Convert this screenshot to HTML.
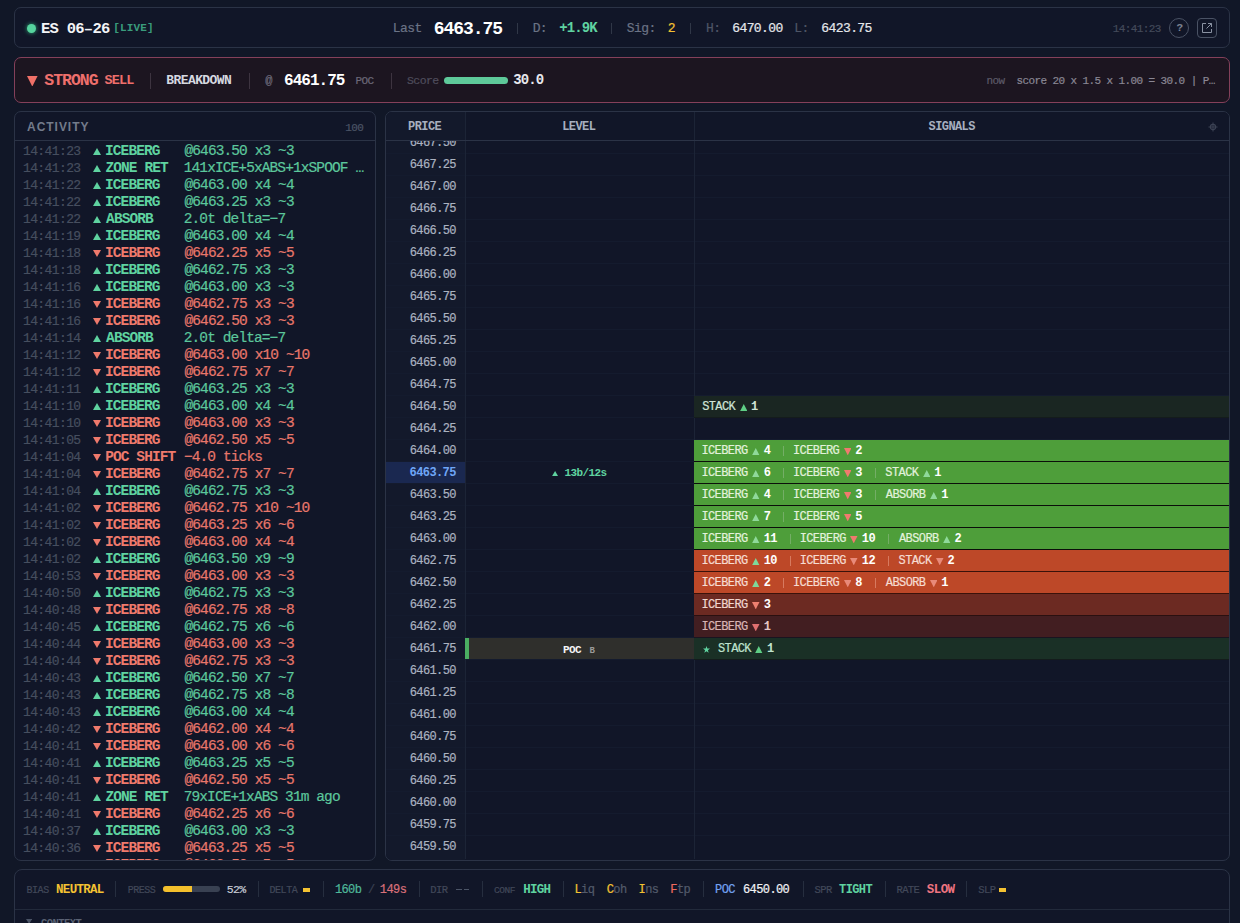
<!DOCTYPE html>
<html><head><meta charset="utf-8"><style>
html,body{margin:0;padding:0;}
body{width:1240px;height:923px;overflow:hidden;background:#111727;position:relative;font-family:"Liberation Mono",monospace;}
.t{position:absolute;white-space:pre;}
.r{-webkit-text-stroke:0.2px currentColor;}
.b{position:absolute;}
</style></head><body>
<div class="b" style="left:14px;top:7px;width:1216px;height:41px;box-sizing:border-box;border:1px solid #2b3346;border-radius:7px;background:#111628;"></div>
<div class="b" style="left:26.5px;top:23.5px;width:9px;height:9px;border-radius:50%;background:#56d49e;box-shadow:0 0 4px #2fae7a;"></div>
<div class="t" style="left:40.96px;top:22.00px;font-size:15.5px;line-height:15.5px;color:#f3f4f6;font-weight:700;letter-spacing:-0.720px;font-family:'Liberation Mono',monospace;">ES 06–26</div>
<div class="t" style="left:113.30px;top:23.00px;font-size:11.0px;line-height:11.0px;color:#3a9c7c;font-weight:700;letter-spacing:0.150px;font-family:'Liberation Mono',monospace;">[LIVE]</div>
<div class="t r" style="left:392.80px;top:22.00px;font-size:13.0px;line-height:13.0px;color:#6b7385;font-weight:400;letter-spacing:-0.600px;font-family:'Liberation Mono',monospace;">Last</div>
<div class="t" style="left:433.80px;top:20.00px;font-size:18.0px;line-height:18.0px;color:#ffffff;font-weight:700;letter-spacing:-1.080px;font-family:'Liberation Mono',monospace;">6463.75</div>
<div class="b" style="left:517px;top:23px;width:1px;height:11px;background:#303747;"></div>
<div class="t r" style="left:532.67px;top:22.00px;font-size:13.0px;line-height:13.0px;color:#6b7385;font-weight:400;letter-spacing:-0.600px;font-family:'Liberation Mono',monospace;">D:</div>
<div class="t" style="left:559.21px;top:21.00px;font-size:14.0px;line-height:14.0px;color:#5fd3a0;font-weight:700;letter-spacing:-0.900px;font-family:'Liberation Mono',monospace;">+1.9K</div>
<div class="b" style="left:611px;top:23px;width:1px;height:11px;background:#303747;"></div>
<div class="t r" style="left:626.80px;top:22.00px;font-size:13.0px;line-height:13.0px;color:#6b7385;font-weight:400;letter-spacing:-0.600px;font-family:'Liberation Mono',monospace;">Sig:</div>
<div class="t r" style="left:667.69px;top:22.00px;font-size:13.0px;line-height:13.0px;color:#f4c232;font-weight:400;letter-spacing:-0.600px;font-family:'Liberation Mono',monospace;">2</div>
<div class="b" style="left:690px;top:23px;width:1px;height:11px;background:#303747;"></div>
<div class="t r" style="left:705.97px;top:22.00px;font-size:13.0px;line-height:13.0px;color:#4e5566;font-weight:400;letter-spacing:-0.600px;font-family:'Liberation Mono',monospace;">H:</div>
<div class="t r" style="left:732.24px;top:22.00px;font-size:13.0px;line-height:13.0px;color:#e5e7eb;font-weight:400;letter-spacing:-0.600px;font-family:'Liberation Mono',monospace;">6470.00</div>
<div class="t r" style="left:794.20px;top:22.00px;font-size:13.0px;line-height:13.0px;color:#4e5566;font-weight:400;letter-spacing:-0.600px;font-family:'Liberation Mono',monospace;">L:</div>
<div class="t r" style="left:821.34px;top:22.00px;font-size:13.0px;line-height:13.0px;color:#e5e7eb;font-weight:400;letter-spacing:-0.600px;font-family:'Liberation Mono',monospace;">6423.75</div>
<div class="t r" style="left:1112.71px;top:24.00px;font-size:11.0px;line-height:11.0px;color:#434a5a;font-weight:400;letter-spacing:-0.600px;font-family:'Liberation Mono',monospace;">14:41:23</div>
<div class="b" style="left:1169px;top:18px;width:20px;height:20px;box-sizing:border-box;border:1px solid #4a5264;border-radius:50%;"></div>
<div class="t" style="left:1176.60px;top:23.00px;font-size:11.0px;line-height:11.0px;color:#7a8292;font-weight:700;letter-spacing:-0.600px;font-family:'Liberation Mono',monospace;">?</div>
<div class="b" style="left:1197px;top:18px;width:20px;height:20px;box-sizing:border-box;border:1px solid #4a5264;border-radius:4px;"></div>
<svg class="b" style="left:1201px;top:22px" width="12" height="12" viewBox="0 0 12 12"><path d="M5 1.5H1.5V10.5H10.5V7" fill="none" stroke="#8a92a2" stroke-width="1"/><path d="M7 1.5H10.5V5M10.5 1.5L5.5 6.5" fill="none" stroke="#8a92a2" stroke-width="1"/></svg>
<div class="b" style="left:14px;top:57px;width:1216px;height:46px;box-sizing:border-box;border:1px solid #84405a;border-radius:7px;background:#1c1520;"></div>
<svg class="b" style="left:27.2px;top:75.5px" width="10.6" height="10.5" viewBox="0 0 10.6 10.5"><polygon points="0,0 10.6,0 5.3,10.5" fill="#f07068"/></svg>
<div class="t" style="left:44.29px;top:73.00px;font-size:16.5px;line-height:16.5px;color:#ee6f6c;font-weight:700;letter-spacing:-1.020px;font-family:'Liberation Mono',monospace;">STRONG</div>
<div class="t" style="left:104.55px;top:74.00px;font-size:13.5px;line-height:13.5px;color:#ee6f6c;font-weight:700;letter-spacing:-0.840px;font-family:'Liberation Mono',monospace;">SELL</div>
<div class="b" style="left:150px;top:73px;width:1px;height:16px;background:#3d3440;"></div>
<div class="t" style="left:166.33px;top:74.00px;font-size:13.0px;line-height:13.0px;color:#d6d9e0;font-weight:700;letter-spacing:-0.600px;font-family:'Liberation Mono',monospace;">BREAKDOWN</div>
<div class="b" style="left:249px;top:73px;width:1px;height:16px;background:#3d3440;"></div>
<div class="t r" style="left:265.24px;top:75.00px;font-size:12.0px;line-height:12.0px;color:#6b6878;font-weight:400;letter-spacing:-0.600px;font-family:'Liberation Mono',monospace;">@</div>
<div class="t" style="left:284.02px;top:73.00px;font-size:16.0px;line-height:16.0px;color:#ffffff;font-weight:700;letter-spacing:-0.960px;font-family:'Liberation Mono',monospace;">6461.75</div>
<div class="t r" style="left:355.43px;top:76.00px;font-size:11.0px;line-height:11.0px;color:#6b6878;font-weight:400;letter-spacing:-0.600px;font-family:'Liberation Mono',monospace;">POC</div>
<div class="b" style="left:391px;top:73px;width:1px;height:16px;background:#3d3440;"></div>
<div class="t r" style="left:407.06px;top:75.00px;font-size:11.5px;line-height:11.5px;color:#4f4d5c;font-weight:400;letter-spacing:-0.600px;font-family:'Liberation Mono',monospace;">Score</div>
<div class="b" style="left:444px;top:76.5px;width:64px;height:7px;border-radius:4px;background:#5ec99a;"></div>
<div class="t" style="left:513.16px;top:73.00px;font-size:14.0px;line-height:14.0px;color:#e8e8ee;font-weight:700;letter-spacing:-0.900px;font-family:'Liberation Mono',monospace;">30.0</div>
<div class="t r" style="left:986.44px;top:76.00px;font-size:11.0px;line-height:11.0px;color:#5c5a68;font-weight:400;letter-spacing:-0.600px;font-family:'Liberation Mono',monospace;">now</div>
<div class="t r" style="left:1016.60px;top:76.00px;font-size:11.0px;line-height:11.0px;color:#8a8794;font-weight:400;letter-spacing:-0.600px;font-family:'Liberation Mono',monospace;">score 20 x 1.5 x 1.00 = 30.0 | P…</div>
<div class="b" style="left:14px;top:111px;width:362px;height:750px;box-sizing:border-box;border:1px solid #2b3346;border-radius:7px;background:#111628;"></div>
<div class="b" style="left:15px;top:140px;width:360px;height:1px;background:#2b3346;"></div>
<div class="t" style="left:27.10px;top:121.12px;font-size:12px;line-height:12px;color:#737b8b;font-weight:700;letter-spacing:0.950px;font-family:'Liberation Sans',sans-serif;">ACTIVITY</div>
<div class="t r" style="left:345.21px;top:123.00px;font-size:11.0px;line-height:11.0px;color:#4b5466;font-weight:400;letter-spacing:-0.600px;font-family:'Liberation Mono',monospace;">100</div>
<div class="b" style="left:15px;top:141px;width:360px;height:719px;overflow:hidden">
<div class="t r" style="left:7.96px;top:4.00px;font-size:13.0px;line-height:13.0px;color:#464e5f;font-weight:400;letter-spacing:-0.600px;font-family:'Liberation Mono',monospace;">14:41:23</div>
<svg class="b" style="left:78.2px;top:6.5px" width="8" height="7" viewBox="0 0 8 7"><polygon points="4.0,0 8,7 0,7" fill="#5fd3a0"/></svg>
<div class="t" style="left:89.99px;top:3.00px;font-size:14.5px;line-height:14.5px;color:#5fd3a0;font-weight:700;letter-spacing:-0.900px;font-family:'Liberation Mono',monospace;">ICEBERG</div>
<div class="t r" style="left:169.49px;top:3.00px;font-size:14.5px;line-height:14.5px;color:#5cc79c;font-weight:400;letter-spacing:-0.900px;font-family:'Liberation Mono',monospace;">@6463.50 x3 ~3</div>
<div class="t r" style="left:7.96px;top:21.00px;font-size:13.0px;line-height:13.0px;color:#464e5f;font-weight:400;letter-spacing:-0.600px;font-family:'Liberation Mono',monospace;">14:41:23</div>
<svg class="b" style="left:78.2px;top:23.5px" width="8" height="7" viewBox="0 0 8 7"><polygon points="4.0,0 8,7 0,7" fill="#5fd3a0"/></svg>
<div class="t" style="left:90.48px;top:20.00px;font-size:14.5px;line-height:14.5px;color:#5fd3a0;font-weight:700;letter-spacing:-0.900px;font-family:'Liberation Mono',monospace;">ZONE RET</div>
<div class="t r" style="left:168.75px;top:20.00px;font-size:14.5px;line-height:14.5px;color:#5cc79c;font-weight:400;letter-spacing:-0.900px;font-family:'Liberation Mono',monospace;">141xICE+5xABS+1xSPOOF …</div>
<div class="t r" style="left:7.96px;top:38.00px;font-size:13.0px;line-height:13.0px;color:#464e5f;font-weight:400;letter-spacing:-0.600px;font-family:'Liberation Mono',monospace;">14:41:22</div>
<svg class="b" style="left:78.2px;top:40.5px" width="8" height="7" viewBox="0 0 8 7"><polygon points="4.0,0 8,7 0,7" fill="#5fd3a0"/></svg>
<div class="t" style="left:89.99px;top:37.00px;font-size:14.5px;line-height:14.5px;color:#5fd3a0;font-weight:700;letter-spacing:-0.900px;font-family:'Liberation Mono',monospace;">ICEBERG</div>
<div class="t r" style="left:169.49px;top:37.00px;font-size:14.5px;line-height:14.5px;color:#5cc79c;font-weight:400;letter-spacing:-0.900px;font-family:'Liberation Mono',monospace;">@6463.00 x4 ~4</div>
<div class="t r" style="left:7.96px;top:55.00px;font-size:13.0px;line-height:13.0px;color:#464e5f;font-weight:400;letter-spacing:-0.600px;font-family:'Liberation Mono',monospace;">14:41:22</div>
<svg class="b" style="left:78.2px;top:57.5px" width="8" height="7" viewBox="0 0 8 7"><polygon points="4.0,0 8,7 0,7" fill="#5fd3a0"/></svg>
<div class="t" style="left:89.99px;top:54.00px;font-size:14.5px;line-height:14.5px;color:#5fd3a0;font-weight:700;letter-spacing:-0.900px;font-family:'Liberation Mono',monospace;">ICEBERG</div>
<div class="t r" style="left:169.49px;top:54.00px;font-size:14.5px;line-height:14.5px;color:#5cc79c;font-weight:400;letter-spacing:-0.900px;font-family:'Liberation Mono',monospace;">@6463.25 x3 ~3</div>
<div class="t r" style="left:7.96px;top:72.00px;font-size:13.0px;line-height:13.0px;color:#464e5f;font-weight:400;letter-spacing:-0.600px;font-family:'Liberation Mono',monospace;">14:41:22</div>
<svg class="b" style="left:78.2px;top:74.5px" width="8" height="7" viewBox="0 0 8 7"><polygon points="4.0,0 8,7 0,7" fill="#5fd3a0"/></svg>
<div class="t" style="left:91.10px;top:71.00px;font-size:14.5px;line-height:14.5px;color:#5fd3a0;font-weight:700;letter-spacing:-0.900px;font-family:'Liberation Mono',monospace;">ABSORB</div>
<div class="t r" style="left:168.78px;top:71.00px;font-size:14.5px;line-height:14.5px;color:#5cc79c;font-weight:400;letter-spacing:-0.900px;font-family:'Liberation Mono',monospace;">2.0t delta=−7</div>
<div class="t r" style="left:7.96px;top:89.00px;font-size:13.0px;line-height:13.0px;color:#464e5f;font-weight:400;letter-spacing:-0.600px;font-family:'Liberation Mono',monospace;">14:41:19</div>
<svg class="b" style="left:78.2px;top:91.5px" width="8" height="7" viewBox="0 0 8 7"><polygon points="4.0,0 8,7 0,7" fill="#5fd3a0"/></svg>
<div class="t" style="left:89.99px;top:88.00px;font-size:14.5px;line-height:14.5px;color:#5fd3a0;font-weight:700;letter-spacing:-0.900px;font-family:'Liberation Mono',monospace;">ICEBERG</div>
<div class="t r" style="left:169.49px;top:88.00px;font-size:14.5px;line-height:14.5px;color:#5cc79c;font-weight:400;letter-spacing:-0.900px;font-family:'Liberation Mono',monospace;">@6463.00 x4 ~4</div>
<div class="t r" style="left:7.96px;top:106.00px;font-size:13.0px;line-height:13.0px;color:#464e5f;font-weight:400;letter-spacing:-0.600px;font-family:'Liberation Mono',monospace;">14:41:18</div>
<svg class="b" style="left:78.2px;top:108.5px" width="8" height="7" viewBox="0 0 8 7"><polygon points="0,0 8,0 4.0,7" fill="#ef7a6c"/></svg>
<div class="t" style="left:89.99px;top:105.00px;font-size:14.5px;line-height:14.5px;color:#ef7a6c;font-weight:700;letter-spacing:-0.900px;font-family:'Liberation Mono',monospace;">ICEBERG</div>
<div class="t r" style="left:169.49px;top:105.00px;font-size:14.5px;line-height:14.5px;color:#e8776b;font-weight:400;letter-spacing:-0.900px;font-family:'Liberation Mono',monospace;">@6462.25 x5 ~5</div>
<div class="t r" style="left:7.96px;top:123.00px;font-size:13.0px;line-height:13.0px;color:#464e5f;font-weight:400;letter-spacing:-0.600px;font-family:'Liberation Mono',monospace;">14:41:18</div>
<svg class="b" style="left:78.2px;top:125.5px" width="8" height="7" viewBox="0 0 8 7"><polygon points="4.0,0 8,7 0,7" fill="#5fd3a0"/></svg>
<div class="t" style="left:89.99px;top:122.00px;font-size:14.5px;line-height:14.5px;color:#5fd3a0;font-weight:700;letter-spacing:-0.900px;font-family:'Liberation Mono',monospace;">ICEBERG</div>
<div class="t r" style="left:169.49px;top:122.00px;font-size:14.5px;line-height:14.5px;color:#5cc79c;font-weight:400;letter-spacing:-0.900px;font-family:'Liberation Mono',monospace;">@6462.75 x3 ~3</div>
<div class="t r" style="left:7.96px;top:140.00px;font-size:13.0px;line-height:13.0px;color:#464e5f;font-weight:400;letter-spacing:-0.600px;font-family:'Liberation Mono',monospace;">14:41:16</div>
<svg class="b" style="left:78.2px;top:142.5px" width="8" height="7" viewBox="0 0 8 7"><polygon points="4.0,0 8,7 0,7" fill="#5fd3a0"/></svg>
<div class="t" style="left:89.99px;top:139.00px;font-size:14.5px;line-height:14.5px;color:#5fd3a0;font-weight:700;letter-spacing:-0.900px;font-family:'Liberation Mono',monospace;">ICEBERG</div>
<div class="t r" style="left:169.49px;top:139.00px;font-size:14.5px;line-height:14.5px;color:#5cc79c;font-weight:400;letter-spacing:-0.900px;font-family:'Liberation Mono',monospace;">@6463.00 x3 ~3</div>
<div class="t r" style="left:7.96px;top:157.00px;font-size:13.0px;line-height:13.0px;color:#464e5f;font-weight:400;letter-spacing:-0.600px;font-family:'Liberation Mono',monospace;">14:41:16</div>
<svg class="b" style="left:78.2px;top:159.5px" width="8" height="7" viewBox="0 0 8 7"><polygon points="0,0 8,0 4.0,7" fill="#ef7a6c"/></svg>
<div class="t" style="left:89.99px;top:156.00px;font-size:14.5px;line-height:14.5px;color:#ef7a6c;font-weight:700;letter-spacing:-0.900px;font-family:'Liberation Mono',monospace;">ICEBERG</div>
<div class="t r" style="left:169.49px;top:156.00px;font-size:14.5px;line-height:14.5px;color:#e8776b;font-weight:400;letter-spacing:-0.900px;font-family:'Liberation Mono',monospace;">@6462.75 x3 ~3</div>
<div class="t r" style="left:7.96px;top:174.00px;font-size:13.0px;line-height:13.0px;color:#464e5f;font-weight:400;letter-spacing:-0.600px;font-family:'Liberation Mono',monospace;">14:41:16</div>
<svg class="b" style="left:78.2px;top:176.5px" width="8" height="7" viewBox="0 0 8 7"><polygon points="0,0 8,0 4.0,7" fill="#ef7a6c"/></svg>
<div class="t" style="left:89.99px;top:173.00px;font-size:14.5px;line-height:14.5px;color:#ef7a6c;font-weight:700;letter-spacing:-0.900px;font-family:'Liberation Mono',monospace;">ICEBERG</div>
<div class="t r" style="left:169.49px;top:173.00px;font-size:14.5px;line-height:14.5px;color:#e8776b;font-weight:400;letter-spacing:-0.900px;font-family:'Liberation Mono',monospace;">@6462.50 x3 ~3</div>
<div class="t r" style="left:7.96px;top:191.00px;font-size:13.0px;line-height:13.0px;color:#464e5f;font-weight:400;letter-spacing:-0.600px;font-family:'Liberation Mono',monospace;">14:41:14</div>
<svg class="b" style="left:78.2px;top:193.5px" width="8" height="7" viewBox="0 0 8 7"><polygon points="4.0,0 8,7 0,7" fill="#5fd3a0"/></svg>
<div class="t" style="left:91.10px;top:190.00px;font-size:14.5px;line-height:14.5px;color:#5fd3a0;font-weight:700;letter-spacing:-0.900px;font-family:'Liberation Mono',monospace;">ABSORB</div>
<div class="t r" style="left:168.78px;top:190.00px;font-size:14.5px;line-height:14.5px;color:#5cc79c;font-weight:400;letter-spacing:-0.900px;font-family:'Liberation Mono',monospace;">2.0t delta=−7</div>
<div class="t r" style="left:7.96px;top:208.00px;font-size:13.0px;line-height:13.0px;color:#464e5f;font-weight:400;letter-spacing:-0.600px;font-family:'Liberation Mono',monospace;">14:41:12</div>
<svg class="b" style="left:78.2px;top:210.5px" width="8" height="7" viewBox="0 0 8 7"><polygon points="0,0 8,0 4.0,7" fill="#ef7a6c"/></svg>
<div class="t" style="left:89.99px;top:207.00px;font-size:14.5px;line-height:14.5px;color:#ef7a6c;font-weight:700;letter-spacing:-0.900px;font-family:'Liberation Mono',monospace;">ICEBERG</div>
<div class="t r" style="left:169.49px;top:207.00px;font-size:14.5px;line-height:14.5px;color:#e8776b;font-weight:400;letter-spacing:-0.900px;font-family:'Liberation Mono',monospace;">@6463.00 x10 ~10</div>
<div class="t r" style="left:7.96px;top:225.00px;font-size:13.0px;line-height:13.0px;color:#464e5f;font-weight:400;letter-spacing:-0.600px;font-family:'Liberation Mono',monospace;">14:41:12</div>
<svg class="b" style="left:78.2px;top:227.5px" width="8" height="7" viewBox="0 0 8 7"><polygon points="0,0 8,0 4.0,7" fill="#ef7a6c"/></svg>
<div class="t" style="left:89.99px;top:224.00px;font-size:14.5px;line-height:14.5px;color:#ef7a6c;font-weight:700;letter-spacing:-0.900px;font-family:'Liberation Mono',monospace;">ICEBERG</div>
<div class="t r" style="left:169.49px;top:224.00px;font-size:14.5px;line-height:14.5px;color:#e8776b;font-weight:400;letter-spacing:-0.900px;font-family:'Liberation Mono',monospace;">@6462.75 x7 ~7</div>
<div class="t r" style="left:7.96px;top:242.00px;font-size:13.0px;line-height:13.0px;color:#464e5f;font-weight:400;letter-spacing:-0.600px;font-family:'Liberation Mono',monospace;">14:41:11</div>
<svg class="b" style="left:78.2px;top:244.5px" width="8" height="7" viewBox="0 0 8 7"><polygon points="4.0,0 8,7 0,7" fill="#5fd3a0"/></svg>
<div class="t" style="left:89.99px;top:241.00px;font-size:14.5px;line-height:14.5px;color:#5fd3a0;font-weight:700;letter-spacing:-0.900px;font-family:'Liberation Mono',monospace;">ICEBERG</div>
<div class="t r" style="left:169.49px;top:241.00px;font-size:14.5px;line-height:14.5px;color:#5cc79c;font-weight:400;letter-spacing:-0.900px;font-family:'Liberation Mono',monospace;">@6463.25 x3 ~3</div>
<div class="t r" style="left:7.96px;top:259.00px;font-size:13.0px;line-height:13.0px;color:#464e5f;font-weight:400;letter-spacing:-0.600px;font-family:'Liberation Mono',monospace;">14:41:10</div>
<svg class="b" style="left:78.2px;top:261.5px" width="8" height="7" viewBox="0 0 8 7"><polygon points="4.0,0 8,7 0,7" fill="#5fd3a0"/></svg>
<div class="t" style="left:89.99px;top:258.00px;font-size:14.5px;line-height:14.5px;color:#5fd3a0;font-weight:700;letter-spacing:-0.900px;font-family:'Liberation Mono',monospace;">ICEBERG</div>
<div class="t r" style="left:169.49px;top:258.00px;font-size:14.5px;line-height:14.5px;color:#5cc79c;font-weight:400;letter-spacing:-0.900px;font-family:'Liberation Mono',monospace;">@6463.00 x4 ~4</div>
<div class="t r" style="left:7.96px;top:276.00px;font-size:13.0px;line-height:13.0px;color:#464e5f;font-weight:400;letter-spacing:-0.600px;font-family:'Liberation Mono',monospace;">14:41:10</div>
<svg class="b" style="left:78.2px;top:278.5px" width="8" height="7" viewBox="0 0 8 7"><polygon points="0,0 8,0 4.0,7" fill="#ef7a6c"/></svg>
<div class="t" style="left:89.99px;top:275.00px;font-size:14.5px;line-height:14.5px;color:#ef7a6c;font-weight:700;letter-spacing:-0.900px;font-family:'Liberation Mono',monospace;">ICEBERG</div>
<div class="t r" style="left:169.49px;top:275.00px;font-size:14.5px;line-height:14.5px;color:#e8776b;font-weight:400;letter-spacing:-0.900px;font-family:'Liberation Mono',monospace;">@6463.00 x3 ~3</div>
<div class="t r" style="left:7.96px;top:293.00px;font-size:13.0px;line-height:13.0px;color:#464e5f;font-weight:400;letter-spacing:-0.600px;font-family:'Liberation Mono',monospace;">14:41:05</div>
<svg class="b" style="left:78.2px;top:295.5px" width="8" height="7" viewBox="0 0 8 7"><polygon points="0,0 8,0 4.0,7" fill="#ef7a6c"/></svg>
<div class="t" style="left:89.99px;top:292.00px;font-size:14.5px;line-height:14.5px;color:#ef7a6c;font-weight:700;letter-spacing:-0.900px;font-family:'Liberation Mono',monospace;">ICEBERG</div>
<div class="t r" style="left:169.49px;top:292.00px;font-size:14.5px;line-height:14.5px;color:#e8776b;font-weight:400;letter-spacing:-0.900px;font-family:'Liberation Mono',monospace;">@6462.50 x5 ~5</div>
<div class="t r" style="left:7.96px;top:310.00px;font-size:13.0px;line-height:13.0px;color:#464e5f;font-weight:400;letter-spacing:-0.600px;font-family:'Liberation Mono',monospace;">14:41:04</div>
<svg class="b" style="left:78.2px;top:312.5px" width="8" height="7" viewBox="0 0 8 7"><polygon points="0,0 8,0 4.0,7" fill="#ef7a6c"/></svg>
<div class="t" style="left:90.14px;top:309.00px;font-size:14.5px;line-height:14.5px;color:#ef7a6c;font-weight:700;letter-spacing:-0.900px;font-family:'Liberation Mono',monospace;">POC SHIFT</div>
<div class="t r" style="left:168.97px;top:309.00px;font-size:14.5px;line-height:14.5px;color:#e8776b;font-weight:400;letter-spacing:-0.900px;font-family:'Liberation Mono',monospace;">−4.0 ticks</div>
<div class="t r" style="left:7.96px;top:327.00px;font-size:13.0px;line-height:13.0px;color:#464e5f;font-weight:400;letter-spacing:-0.600px;font-family:'Liberation Mono',monospace;">14:41:04</div>
<svg class="b" style="left:78.2px;top:329.5px" width="8" height="7" viewBox="0 0 8 7"><polygon points="0,0 8,0 4.0,7" fill="#ef7a6c"/></svg>
<div class="t" style="left:89.99px;top:326.00px;font-size:14.5px;line-height:14.5px;color:#ef7a6c;font-weight:700;letter-spacing:-0.900px;font-family:'Liberation Mono',monospace;">ICEBERG</div>
<div class="t r" style="left:169.49px;top:326.00px;font-size:14.5px;line-height:14.5px;color:#e8776b;font-weight:400;letter-spacing:-0.900px;font-family:'Liberation Mono',monospace;">@6462.75 x7 ~7</div>
<div class="t r" style="left:7.96px;top:344.00px;font-size:13.0px;line-height:13.0px;color:#464e5f;font-weight:400;letter-spacing:-0.600px;font-family:'Liberation Mono',monospace;">14:41:04</div>
<svg class="b" style="left:78.2px;top:346.5px" width="8" height="7" viewBox="0 0 8 7"><polygon points="4.0,0 8,7 0,7" fill="#5fd3a0"/></svg>
<div class="t" style="left:89.99px;top:343.00px;font-size:14.5px;line-height:14.5px;color:#5fd3a0;font-weight:700;letter-spacing:-0.900px;font-family:'Liberation Mono',monospace;">ICEBERG</div>
<div class="t r" style="left:169.49px;top:343.00px;font-size:14.5px;line-height:14.5px;color:#5cc79c;font-weight:400;letter-spacing:-0.900px;font-family:'Liberation Mono',monospace;">@6462.75 x3 ~3</div>
<div class="t r" style="left:7.96px;top:361.00px;font-size:13.0px;line-height:13.0px;color:#464e5f;font-weight:400;letter-spacing:-0.600px;font-family:'Liberation Mono',monospace;">14:41:02</div>
<svg class="b" style="left:78.2px;top:363.5px" width="8" height="7" viewBox="0 0 8 7"><polygon points="0,0 8,0 4.0,7" fill="#ef7a6c"/></svg>
<div class="t" style="left:89.99px;top:360.00px;font-size:14.5px;line-height:14.5px;color:#ef7a6c;font-weight:700;letter-spacing:-0.900px;font-family:'Liberation Mono',monospace;">ICEBERG</div>
<div class="t r" style="left:169.49px;top:360.00px;font-size:14.5px;line-height:14.5px;color:#e8776b;font-weight:400;letter-spacing:-0.900px;font-family:'Liberation Mono',monospace;">@6462.75 x10 ~10</div>
<div class="t r" style="left:7.96px;top:378.00px;font-size:13.0px;line-height:13.0px;color:#464e5f;font-weight:400;letter-spacing:-0.600px;font-family:'Liberation Mono',monospace;">14:41:02</div>
<svg class="b" style="left:78.2px;top:380.5px" width="8" height="7" viewBox="0 0 8 7"><polygon points="0,0 8,0 4.0,7" fill="#ef7a6c"/></svg>
<div class="t" style="left:89.99px;top:377.00px;font-size:14.5px;line-height:14.5px;color:#ef7a6c;font-weight:700;letter-spacing:-0.900px;font-family:'Liberation Mono',monospace;">ICEBERG</div>
<div class="t r" style="left:169.49px;top:377.00px;font-size:14.5px;line-height:14.5px;color:#e8776b;font-weight:400;letter-spacing:-0.900px;font-family:'Liberation Mono',monospace;">@6463.25 x6 ~6</div>
<div class="t r" style="left:7.96px;top:395.00px;font-size:13.0px;line-height:13.0px;color:#464e5f;font-weight:400;letter-spacing:-0.600px;font-family:'Liberation Mono',monospace;">14:41:02</div>
<svg class="b" style="left:78.2px;top:397.5px" width="8" height="7" viewBox="0 0 8 7"><polygon points="0,0 8,0 4.0,7" fill="#ef7a6c"/></svg>
<div class="t" style="left:89.99px;top:394.00px;font-size:14.5px;line-height:14.5px;color:#ef7a6c;font-weight:700;letter-spacing:-0.900px;font-family:'Liberation Mono',monospace;">ICEBERG</div>
<div class="t r" style="left:169.49px;top:394.00px;font-size:14.5px;line-height:14.5px;color:#e8776b;font-weight:400;letter-spacing:-0.900px;font-family:'Liberation Mono',monospace;">@6463.00 x4 ~4</div>
<div class="t r" style="left:7.96px;top:412.00px;font-size:13.0px;line-height:13.0px;color:#464e5f;font-weight:400;letter-spacing:-0.600px;font-family:'Liberation Mono',monospace;">14:41:02</div>
<svg class="b" style="left:78.2px;top:414.5px" width="8" height="7" viewBox="0 0 8 7"><polygon points="4.0,0 8,7 0,7" fill="#5fd3a0"/></svg>
<div class="t" style="left:89.99px;top:411.00px;font-size:14.5px;line-height:14.5px;color:#5fd3a0;font-weight:700;letter-spacing:-0.900px;font-family:'Liberation Mono',monospace;">ICEBERG</div>
<div class="t r" style="left:169.49px;top:411.00px;font-size:14.5px;line-height:14.5px;color:#5cc79c;font-weight:400;letter-spacing:-0.900px;font-family:'Liberation Mono',monospace;">@6463.50 x9 ~9</div>
<div class="t r" style="left:7.96px;top:429.00px;font-size:13.0px;line-height:13.0px;color:#464e5f;font-weight:400;letter-spacing:-0.600px;font-family:'Liberation Mono',monospace;">14:40:53</div>
<svg class="b" style="left:78.2px;top:431.5px" width="8" height="7" viewBox="0 0 8 7"><polygon points="0,0 8,0 4.0,7" fill="#ef7a6c"/></svg>
<div class="t" style="left:89.99px;top:428.00px;font-size:14.5px;line-height:14.5px;color:#ef7a6c;font-weight:700;letter-spacing:-0.900px;font-family:'Liberation Mono',monospace;">ICEBERG</div>
<div class="t r" style="left:169.49px;top:428.00px;font-size:14.5px;line-height:14.5px;color:#e8776b;font-weight:400;letter-spacing:-0.900px;font-family:'Liberation Mono',monospace;">@6463.00 x3 ~3</div>
<div class="t r" style="left:7.96px;top:446.00px;font-size:13.0px;line-height:13.0px;color:#464e5f;font-weight:400;letter-spacing:-0.600px;font-family:'Liberation Mono',monospace;">14:40:50</div>
<svg class="b" style="left:78.2px;top:448.5px" width="8" height="7" viewBox="0 0 8 7"><polygon points="4.0,0 8,7 0,7" fill="#5fd3a0"/></svg>
<div class="t" style="left:89.99px;top:445.00px;font-size:14.5px;line-height:14.5px;color:#5fd3a0;font-weight:700;letter-spacing:-0.900px;font-family:'Liberation Mono',monospace;">ICEBERG</div>
<div class="t r" style="left:169.49px;top:445.00px;font-size:14.5px;line-height:14.5px;color:#5cc79c;font-weight:400;letter-spacing:-0.900px;font-family:'Liberation Mono',monospace;">@6462.75 x3 ~3</div>
<div class="t r" style="left:7.96px;top:463.00px;font-size:13.0px;line-height:13.0px;color:#464e5f;font-weight:400;letter-spacing:-0.600px;font-family:'Liberation Mono',monospace;">14:40:48</div>
<svg class="b" style="left:78.2px;top:465.5px" width="8" height="7" viewBox="0 0 8 7"><polygon points="0,0 8,0 4.0,7" fill="#ef7a6c"/></svg>
<div class="t" style="left:89.99px;top:462.00px;font-size:14.5px;line-height:14.5px;color:#ef7a6c;font-weight:700;letter-spacing:-0.900px;font-family:'Liberation Mono',monospace;">ICEBERG</div>
<div class="t r" style="left:169.49px;top:462.00px;font-size:14.5px;line-height:14.5px;color:#e8776b;font-weight:400;letter-spacing:-0.900px;font-family:'Liberation Mono',monospace;">@6462.75 x8 ~8</div>
<div class="t r" style="left:7.96px;top:480.00px;font-size:13.0px;line-height:13.0px;color:#464e5f;font-weight:400;letter-spacing:-0.600px;font-family:'Liberation Mono',monospace;">14:40:45</div>
<svg class="b" style="left:78.2px;top:482.5px" width="8" height="7" viewBox="0 0 8 7"><polygon points="4.0,0 8,7 0,7" fill="#5fd3a0"/></svg>
<div class="t" style="left:89.99px;top:479.00px;font-size:14.5px;line-height:14.5px;color:#5fd3a0;font-weight:700;letter-spacing:-0.900px;font-family:'Liberation Mono',monospace;">ICEBERG</div>
<div class="t r" style="left:169.49px;top:479.00px;font-size:14.5px;line-height:14.5px;color:#5cc79c;font-weight:400;letter-spacing:-0.900px;font-family:'Liberation Mono',monospace;">@6462.75 x6 ~6</div>
<div class="t r" style="left:7.96px;top:497.00px;font-size:13.0px;line-height:13.0px;color:#464e5f;font-weight:400;letter-spacing:-0.600px;font-family:'Liberation Mono',monospace;">14:40:44</div>
<svg class="b" style="left:78.2px;top:499.5px" width="8" height="7" viewBox="0 0 8 7"><polygon points="0,0 8,0 4.0,7" fill="#ef7a6c"/></svg>
<div class="t" style="left:89.99px;top:496.00px;font-size:14.5px;line-height:14.5px;color:#ef7a6c;font-weight:700;letter-spacing:-0.900px;font-family:'Liberation Mono',monospace;">ICEBERG</div>
<div class="t r" style="left:169.49px;top:496.00px;font-size:14.5px;line-height:14.5px;color:#e8776b;font-weight:400;letter-spacing:-0.900px;font-family:'Liberation Mono',monospace;">@6463.00 x3 ~3</div>
<div class="t r" style="left:7.96px;top:514.00px;font-size:13.0px;line-height:13.0px;color:#464e5f;font-weight:400;letter-spacing:-0.600px;font-family:'Liberation Mono',monospace;">14:40:44</div>
<svg class="b" style="left:78.2px;top:516.5px" width="8" height="7" viewBox="0 0 8 7"><polygon points="0,0 8,0 4.0,7" fill="#ef7a6c"/></svg>
<div class="t" style="left:89.99px;top:513.00px;font-size:14.5px;line-height:14.5px;color:#ef7a6c;font-weight:700;letter-spacing:-0.900px;font-family:'Liberation Mono',monospace;">ICEBERG</div>
<div class="t r" style="left:169.49px;top:513.00px;font-size:14.5px;line-height:14.5px;color:#e8776b;font-weight:400;letter-spacing:-0.900px;font-family:'Liberation Mono',monospace;">@6462.75 x3 ~3</div>
<div class="t r" style="left:7.96px;top:531.00px;font-size:13.0px;line-height:13.0px;color:#464e5f;font-weight:400;letter-spacing:-0.600px;font-family:'Liberation Mono',monospace;">14:40:43</div>
<svg class="b" style="left:78.2px;top:533.5px" width="8" height="7" viewBox="0 0 8 7"><polygon points="4.0,0 8,7 0,7" fill="#5fd3a0"/></svg>
<div class="t" style="left:89.99px;top:530.00px;font-size:14.5px;line-height:14.5px;color:#5fd3a0;font-weight:700;letter-spacing:-0.900px;font-family:'Liberation Mono',monospace;">ICEBERG</div>
<div class="t r" style="left:169.49px;top:530.00px;font-size:14.5px;line-height:14.5px;color:#5cc79c;font-weight:400;letter-spacing:-0.900px;font-family:'Liberation Mono',monospace;">@6462.50 x7 ~7</div>
<div class="t r" style="left:7.96px;top:548.00px;font-size:13.0px;line-height:13.0px;color:#464e5f;font-weight:400;letter-spacing:-0.600px;font-family:'Liberation Mono',monospace;">14:40:43</div>
<svg class="b" style="left:78.2px;top:550.5px" width="8" height="7" viewBox="0 0 8 7"><polygon points="4.0,0 8,7 0,7" fill="#5fd3a0"/></svg>
<div class="t" style="left:89.99px;top:547.00px;font-size:14.5px;line-height:14.5px;color:#5fd3a0;font-weight:700;letter-spacing:-0.900px;font-family:'Liberation Mono',monospace;">ICEBERG</div>
<div class="t r" style="left:169.49px;top:547.00px;font-size:14.5px;line-height:14.5px;color:#5cc79c;font-weight:400;letter-spacing:-0.900px;font-family:'Liberation Mono',monospace;">@6462.75 x8 ~8</div>
<div class="t r" style="left:7.96px;top:565.00px;font-size:13.0px;line-height:13.0px;color:#464e5f;font-weight:400;letter-spacing:-0.600px;font-family:'Liberation Mono',monospace;">14:40:43</div>
<svg class="b" style="left:78.2px;top:567.5px" width="8" height="7" viewBox="0 0 8 7"><polygon points="4.0,0 8,7 0,7" fill="#5fd3a0"/></svg>
<div class="t" style="left:89.99px;top:564.00px;font-size:14.5px;line-height:14.5px;color:#5fd3a0;font-weight:700;letter-spacing:-0.900px;font-family:'Liberation Mono',monospace;">ICEBERG</div>
<div class="t r" style="left:169.49px;top:564.00px;font-size:14.5px;line-height:14.5px;color:#5cc79c;font-weight:400;letter-spacing:-0.900px;font-family:'Liberation Mono',monospace;">@6463.00 x4 ~4</div>
<div class="t r" style="left:7.96px;top:582.00px;font-size:13.0px;line-height:13.0px;color:#464e5f;font-weight:400;letter-spacing:-0.600px;font-family:'Liberation Mono',monospace;">14:40:42</div>
<svg class="b" style="left:78.2px;top:584.5px" width="8" height="7" viewBox="0 0 8 7"><polygon points="0,0 8,0 4.0,7" fill="#ef7a6c"/></svg>
<div class="t" style="left:89.99px;top:581.00px;font-size:14.5px;line-height:14.5px;color:#ef7a6c;font-weight:700;letter-spacing:-0.900px;font-family:'Liberation Mono',monospace;">ICEBERG</div>
<div class="t r" style="left:169.49px;top:581.00px;font-size:14.5px;line-height:14.5px;color:#e8776b;font-weight:400;letter-spacing:-0.900px;font-family:'Liberation Mono',monospace;">@6462.00 x4 ~4</div>
<div class="t r" style="left:7.96px;top:599.00px;font-size:13.0px;line-height:13.0px;color:#464e5f;font-weight:400;letter-spacing:-0.600px;font-family:'Liberation Mono',monospace;">14:40:41</div>
<svg class="b" style="left:78.2px;top:601.5px" width="8" height="7" viewBox="0 0 8 7"><polygon points="0,0 8,0 4.0,7" fill="#ef7a6c"/></svg>
<div class="t" style="left:89.99px;top:598.00px;font-size:14.5px;line-height:14.5px;color:#ef7a6c;font-weight:700;letter-spacing:-0.900px;font-family:'Liberation Mono',monospace;">ICEBERG</div>
<div class="t r" style="left:169.49px;top:598.00px;font-size:14.5px;line-height:14.5px;color:#e8776b;font-weight:400;letter-spacing:-0.900px;font-family:'Liberation Mono',monospace;">@6463.00 x6 ~6</div>
<div class="t r" style="left:7.96px;top:616.00px;font-size:13.0px;line-height:13.0px;color:#464e5f;font-weight:400;letter-spacing:-0.600px;font-family:'Liberation Mono',monospace;">14:40:41</div>
<svg class="b" style="left:78.2px;top:618.5px" width="8" height="7" viewBox="0 0 8 7"><polygon points="4.0,0 8,7 0,7" fill="#5fd3a0"/></svg>
<div class="t" style="left:89.99px;top:615.00px;font-size:14.5px;line-height:14.5px;color:#5fd3a0;font-weight:700;letter-spacing:-0.900px;font-family:'Liberation Mono',monospace;">ICEBERG</div>
<div class="t r" style="left:169.49px;top:615.00px;font-size:14.5px;line-height:14.5px;color:#5cc79c;font-weight:400;letter-spacing:-0.900px;font-family:'Liberation Mono',monospace;">@6463.25 x5 ~5</div>
<div class="t r" style="left:7.96px;top:633.00px;font-size:13.0px;line-height:13.0px;color:#464e5f;font-weight:400;letter-spacing:-0.600px;font-family:'Liberation Mono',monospace;">14:40:41</div>
<svg class="b" style="left:78.2px;top:635.5px" width="8" height="7" viewBox="0 0 8 7"><polygon points="0,0 8,0 4.0,7" fill="#ef7a6c"/></svg>
<div class="t" style="left:89.99px;top:632.00px;font-size:14.5px;line-height:14.5px;color:#ef7a6c;font-weight:700;letter-spacing:-0.900px;font-family:'Liberation Mono',monospace;">ICEBERG</div>
<div class="t r" style="left:169.49px;top:632.00px;font-size:14.5px;line-height:14.5px;color:#e8776b;font-weight:400;letter-spacing:-0.900px;font-family:'Liberation Mono',monospace;">@6462.50 x5 ~5</div>
<div class="t r" style="left:7.96px;top:650.00px;font-size:13.0px;line-height:13.0px;color:#464e5f;font-weight:400;letter-spacing:-0.600px;font-family:'Liberation Mono',monospace;">14:40:41</div>
<svg class="b" style="left:78.2px;top:652.5px" width="8" height="7" viewBox="0 0 8 7"><polygon points="4.0,0 8,7 0,7" fill="#5fd3a0"/></svg>
<div class="t" style="left:90.48px;top:649.00px;font-size:14.5px;line-height:14.5px;color:#5fd3a0;font-weight:700;letter-spacing:-0.900px;font-family:'Liberation Mono',monospace;">ZONE RET</div>
<div class="t r" style="left:168.68px;top:649.00px;font-size:14.5px;line-height:14.5px;color:#5cc79c;font-weight:400;letter-spacing:-0.900px;font-family:'Liberation Mono',monospace;">79xICE+1xABS 31m ago</div>
<div class="t r" style="left:7.96px;top:667.00px;font-size:13.0px;line-height:13.0px;color:#464e5f;font-weight:400;letter-spacing:-0.600px;font-family:'Liberation Mono',monospace;">14:40:41</div>
<svg class="b" style="left:78.2px;top:669.5px" width="8" height="7" viewBox="0 0 8 7"><polygon points="0,0 8,0 4.0,7" fill="#ef7a6c"/></svg>
<div class="t" style="left:89.99px;top:666.00px;font-size:14.5px;line-height:14.5px;color:#ef7a6c;font-weight:700;letter-spacing:-0.900px;font-family:'Liberation Mono',monospace;">ICEBERG</div>
<div class="t r" style="left:169.49px;top:666.00px;font-size:14.5px;line-height:14.5px;color:#e8776b;font-weight:400;letter-spacing:-0.900px;font-family:'Liberation Mono',monospace;">@6462.25 x6 ~6</div>
<div class="t r" style="left:7.96px;top:684.00px;font-size:13.0px;line-height:13.0px;color:#464e5f;font-weight:400;letter-spacing:-0.600px;font-family:'Liberation Mono',monospace;">14:40:37</div>
<svg class="b" style="left:78.2px;top:686.5px" width="8" height="7" viewBox="0 0 8 7"><polygon points="4.0,0 8,7 0,7" fill="#5fd3a0"/></svg>
<div class="t" style="left:89.99px;top:683.00px;font-size:14.5px;line-height:14.5px;color:#5fd3a0;font-weight:700;letter-spacing:-0.900px;font-family:'Liberation Mono',monospace;">ICEBERG</div>
<div class="t r" style="left:169.49px;top:683.00px;font-size:14.5px;line-height:14.5px;color:#5cc79c;font-weight:400;letter-spacing:-0.900px;font-family:'Liberation Mono',monospace;">@6463.00 x3 ~3</div>
<div class="t r" style="left:7.96px;top:701.00px;font-size:13.0px;line-height:13.0px;color:#464e5f;font-weight:400;letter-spacing:-0.600px;font-family:'Liberation Mono',monospace;">14:40:36</div>
<svg class="b" style="left:78.2px;top:703.5px" width="8" height="7" viewBox="0 0 8 7"><polygon points="0,0 8,0 4.0,7" fill="#ef7a6c"/></svg>
<div class="t" style="left:89.99px;top:700.00px;font-size:14.5px;line-height:14.5px;color:#ef7a6c;font-weight:700;letter-spacing:-0.900px;font-family:'Liberation Mono',monospace;">ICEBERG</div>
<div class="t r" style="left:169.49px;top:700.00px;font-size:14.5px;line-height:14.5px;color:#e8776b;font-weight:400;letter-spacing:-0.900px;font-family:'Liberation Mono',monospace;">@6463.25 x5 ~5</div>
<div class="t r" style="left:7.96px;top:718.00px;font-size:13.0px;line-height:13.0px;color:#464e5f;font-weight:400;letter-spacing:-0.600px;font-family:'Liberation Mono',monospace;">14:40:36</div>
<svg class="b" style="left:78.2px;top:720.5px" width="8" height="7" viewBox="0 0 8 7"><polygon points="0,0 8,0 4.0,7" fill="#ef7a6c"/></svg>
<div class="t" style="left:89.99px;top:717.00px;font-size:14.5px;line-height:14.5px;color:#ef7a6c;font-weight:700;letter-spacing:-0.900px;font-family:'Liberation Mono',monospace;">ICEBERG</div>
<div class="t r" style="left:169.49px;top:717.00px;font-size:14.5px;line-height:14.5px;color:#e8776b;font-weight:400;letter-spacing:-0.900px;font-family:'Liberation Mono',monospace;">@6462.50 x5 ~5</div>
</div>
<div class="b" style="left:385px;top:111px;width:845px;height:750px;box-sizing:border-box;border:1px solid #2b3346;border-radius:7px;background:#111628;"></div>
<div class="b" style="left:386px;top:112px;width:843px;height:748px;overflow:hidden;border-radius:6px">
<div class="b" style="left:0px;top:0px;width:79px;height:748px;background:#13192b;"></div>
<div class="b" style="left:79px;top:0px;width:764px;height:28px;background:#111628;"></div>
<div class="t" style="left:22.10px;top:9.00px;font-size:12.0px;line-height:12.0px;color:#a7afbf;font-weight:700;letter-spacing:-0.600px;font-family:'Liberation Mono',monospace;">PRICE</div>
<div class="t" style="left:176.26px;top:9.00px;font-size:12.0px;line-height:12.0px;color:#a7afbf;font-weight:700;letter-spacing:-0.600px;font-family:'Liberation Mono',monospace;">LEVEL</div>
<div class="t" style="left:542.58px;top:9.00px;font-size:12.0px;line-height:12.0px;color:#a7afbf;font-weight:700;letter-spacing:-0.600px;font-family:'Liberation Mono',monospace;">SIGNALS</div>
<svg class="b" style="left:822px;top:9.5px" width="10" height="10" viewBox="0 0 10 10"><circle cx="5" cy="5" r="2.6" fill="none" stroke="#3c4354" stroke-width="1.1"/><path d="M5 0.5V9.5M0.5 5H9.5" stroke="#3c4354" stroke-width="1"/></svg>
<div class="b" style="left:0px;top:29px;width:843px;height:719px;overflow:hidden">
<div class="b" style="left:0px;top:-10px;width:843px;height:1px;background:#141b2e;"></div>
<div class="t r" style="left:23.73px;top:-4.00px;font-size:12.0px;line-height:12.0px;color:#aab2c0;font-weight:400;letter-spacing:-0.600px;font-family:'Liberation Mono',monospace;">6467.50</div>
<div class="b" style="left:0px;top:12px;width:843px;height:1px;background:#141b2e;"></div>
<div class="t r" style="left:23.75px;top:18.00px;font-size:12.0px;line-height:12.0px;color:#aab2c0;font-weight:400;letter-spacing:-0.600px;font-family:'Liberation Mono',monospace;">6467.25</div>
<div class="b" style="left:0px;top:34px;width:843px;height:1px;background:#141b2e;"></div>
<div class="t r" style="left:23.73px;top:40.00px;font-size:12.0px;line-height:12.0px;color:#aab2c0;font-weight:400;letter-spacing:-0.600px;font-family:'Liberation Mono',monospace;">6467.00</div>
<div class="b" style="left:0px;top:56px;width:843px;height:1px;background:#141b2e;"></div>
<div class="t r" style="left:23.75px;top:62.00px;font-size:12.0px;line-height:12.0px;color:#aab2c0;font-weight:400;letter-spacing:-0.600px;font-family:'Liberation Mono',monospace;">6466.75</div>
<div class="b" style="left:0px;top:78px;width:843px;height:1px;background:#141b2e;"></div>
<div class="t r" style="left:23.73px;top:84.00px;font-size:12.0px;line-height:12.0px;color:#aab2c0;font-weight:400;letter-spacing:-0.600px;font-family:'Liberation Mono',monospace;">6466.50</div>
<div class="b" style="left:0px;top:100px;width:843px;height:1px;background:#141b2e;"></div>
<div class="t r" style="left:23.75px;top:106.00px;font-size:12.0px;line-height:12.0px;color:#aab2c0;font-weight:400;letter-spacing:-0.600px;font-family:'Liberation Mono',monospace;">6466.25</div>
<div class="b" style="left:0px;top:122px;width:843px;height:1px;background:#141b2e;"></div>
<div class="t r" style="left:23.73px;top:128.00px;font-size:12.0px;line-height:12.0px;color:#aab2c0;font-weight:400;letter-spacing:-0.600px;font-family:'Liberation Mono',monospace;">6466.00</div>
<div class="b" style="left:0px;top:144px;width:843px;height:1px;background:#141b2e;"></div>
<div class="t r" style="left:23.75px;top:150.00px;font-size:12.0px;line-height:12.0px;color:#aab2c0;font-weight:400;letter-spacing:-0.600px;font-family:'Liberation Mono',monospace;">6465.75</div>
<div class="b" style="left:0px;top:166px;width:843px;height:1px;background:#141b2e;"></div>
<div class="t r" style="left:23.73px;top:172.00px;font-size:12.0px;line-height:12.0px;color:#aab2c0;font-weight:400;letter-spacing:-0.600px;font-family:'Liberation Mono',monospace;">6465.50</div>
<div class="b" style="left:0px;top:188px;width:843px;height:1px;background:#141b2e;"></div>
<div class="t r" style="left:23.75px;top:194.00px;font-size:12.0px;line-height:12.0px;color:#aab2c0;font-weight:400;letter-spacing:-0.600px;font-family:'Liberation Mono',monospace;">6465.25</div>
<div class="b" style="left:0px;top:210px;width:843px;height:1px;background:#141b2e;"></div>
<div class="t r" style="left:23.73px;top:216.00px;font-size:12.0px;line-height:12.0px;color:#aab2c0;font-weight:400;letter-spacing:-0.600px;font-family:'Liberation Mono',monospace;">6465.00</div>
<div class="b" style="left:0px;top:232px;width:843px;height:1px;background:#141b2e;"></div>
<div class="t r" style="left:23.75px;top:238.00px;font-size:12.0px;line-height:12.0px;color:#aab2c0;font-weight:400;letter-spacing:-0.600px;font-family:'Liberation Mono',monospace;">6464.75</div>
<div class="b" style="left:0px;top:254px;width:843px;height:1px;background:#141b2e;"></div>
<div class="t r" style="left:23.73px;top:260.00px;font-size:12.0px;line-height:12.0px;color:#aab2c0;font-weight:400;letter-spacing:-0.600px;font-family:'Liberation Mono',monospace;">6464.50</div>
<div class="b" style="left:0px;top:276px;width:843px;height:1px;background:#141b2e;"></div>
<div class="t r" style="left:23.75px;top:282.00px;font-size:12.0px;line-height:12.0px;color:#aab2c0;font-weight:400;letter-spacing:-0.600px;font-family:'Liberation Mono',monospace;">6464.25</div>
<div class="b" style="left:0px;top:298px;width:843px;height:1px;background:#141b2e;"></div>
<div class="t r" style="left:23.73px;top:304.00px;font-size:12.0px;line-height:12.0px;color:#aab2c0;font-weight:400;letter-spacing:-0.600px;font-family:'Liberation Mono',monospace;">6464.00</div>
<div class="b" style="left:0px;top:320px;width:843px;height:1px;background:#141b2e;"></div>
<div class="b" style="left:0px;top:321px;width:79px;height:21px;background:#1a2850;"></div>
<div class="t" style="left:23.61px;top:326.00px;font-size:12.0px;line-height:12.0px;color:#6fa6f7;font-weight:700;letter-spacing:-0.600px;font-family:'Liberation Mono',monospace;">6463.75</div>
<div class="b" style="left:0px;top:342px;width:843px;height:1px;background:#141b2e;"></div>
<div class="t r" style="left:23.73px;top:348.00px;font-size:12.0px;line-height:12.0px;color:#aab2c0;font-weight:400;letter-spacing:-0.600px;font-family:'Liberation Mono',monospace;">6463.50</div>
<div class="b" style="left:0px;top:364px;width:843px;height:1px;background:#141b2e;"></div>
<div class="t r" style="left:23.75px;top:370.00px;font-size:12.0px;line-height:12.0px;color:#aab2c0;font-weight:400;letter-spacing:-0.600px;font-family:'Liberation Mono',monospace;">6463.25</div>
<div class="b" style="left:0px;top:386px;width:843px;height:1px;background:#141b2e;"></div>
<div class="t r" style="left:23.73px;top:392.00px;font-size:12.0px;line-height:12.0px;color:#aab2c0;font-weight:400;letter-spacing:-0.600px;font-family:'Liberation Mono',monospace;">6463.00</div>
<div class="b" style="left:0px;top:408px;width:843px;height:1px;background:#141b2e;"></div>
<div class="t r" style="left:23.75px;top:414.00px;font-size:12.0px;line-height:12.0px;color:#aab2c0;font-weight:400;letter-spacing:-0.600px;font-family:'Liberation Mono',monospace;">6462.75</div>
<div class="b" style="left:0px;top:430px;width:843px;height:1px;background:#141b2e;"></div>
<div class="t r" style="left:23.73px;top:436.00px;font-size:12.0px;line-height:12.0px;color:#aab2c0;font-weight:400;letter-spacing:-0.600px;font-family:'Liberation Mono',monospace;">6462.50</div>
<div class="b" style="left:0px;top:452px;width:843px;height:1px;background:#141b2e;"></div>
<div class="t r" style="left:23.75px;top:458.00px;font-size:12.0px;line-height:12.0px;color:#aab2c0;font-weight:400;letter-spacing:-0.600px;font-family:'Liberation Mono',monospace;">6462.25</div>
<div class="b" style="left:0px;top:474px;width:843px;height:1px;background:#141b2e;"></div>
<div class="t r" style="left:23.73px;top:480.00px;font-size:12.0px;line-height:12.0px;color:#aab2c0;font-weight:400;letter-spacing:-0.600px;font-family:'Liberation Mono',monospace;">6462.00</div>
<div class="b" style="left:0px;top:496px;width:843px;height:1px;background:#141b2e;"></div>
<div class="t r" style="left:23.75px;top:502.00px;font-size:12.0px;line-height:12.0px;color:#aab2c0;font-weight:400;letter-spacing:-0.600px;font-family:'Liberation Mono',monospace;">6461.75</div>
<div class="b" style="left:0px;top:518px;width:843px;height:1px;background:#141b2e;"></div>
<div class="t r" style="left:23.73px;top:524.00px;font-size:12.0px;line-height:12.0px;color:#aab2c0;font-weight:400;letter-spacing:-0.600px;font-family:'Liberation Mono',monospace;">6461.50</div>
<div class="b" style="left:0px;top:540px;width:843px;height:1px;background:#141b2e;"></div>
<div class="t r" style="left:23.75px;top:546.00px;font-size:12.0px;line-height:12.0px;color:#aab2c0;font-weight:400;letter-spacing:-0.600px;font-family:'Liberation Mono',monospace;">6461.25</div>
<div class="b" style="left:0px;top:562px;width:843px;height:1px;background:#141b2e;"></div>
<div class="t r" style="left:23.73px;top:568.00px;font-size:12.0px;line-height:12.0px;color:#aab2c0;font-weight:400;letter-spacing:-0.600px;font-family:'Liberation Mono',monospace;">6461.00</div>
<div class="b" style="left:0px;top:584px;width:843px;height:1px;background:#141b2e;"></div>
<div class="t r" style="left:23.75px;top:590.00px;font-size:12.0px;line-height:12.0px;color:#aab2c0;font-weight:400;letter-spacing:-0.600px;font-family:'Liberation Mono',monospace;">6460.75</div>
<div class="b" style="left:0px;top:606px;width:843px;height:1px;background:#141b2e;"></div>
<div class="t r" style="left:23.73px;top:612.00px;font-size:12.0px;line-height:12.0px;color:#aab2c0;font-weight:400;letter-spacing:-0.600px;font-family:'Liberation Mono',monospace;">6460.50</div>
<div class="b" style="left:0px;top:628px;width:843px;height:1px;background:#141b2e;"></div>
<div class="t r" style="left:23.75px;top:634.00px;font-size:12.0px;line-height:12.0px;color:#aab2c0;font-weight:400;letter-spacing:-0.600px;font-family:'Liberation Mono',monospace;">6460.25</div>
<div class="b" style="left:0px;top:650px;width:843px;height:1px;background:#141b2e;"></div>
<div class="t r" style="left:23.73px;top:656.00px;font-size:12.0px;line-height:12.0px;color:#aab2c0;font-weight:400;letter-spacing:-0.600px;font-family:'Liberation Mono',monospace;">6460.00</div>
<div class="b" style="left:0px;top:672px;width:843px;height:1px;background:#141b2e;"></div>
<div class="t r" style="left:23.75px;top:678.00px;font-size:12.0px;line-height:12.0px;color:#aab2c0;font-weight:400;letter-spacing:-0.600px;font-family:'Liberation Mono',monospace;">6459.75</div>
<div class="b" style="left:0px;top:694px;width:843px;height:1px;background:#141b2e;"></div>
<div class="t r" style="left:23.73px;top:700.00px;font-size:12.0px;line-height:12.0px;color:#aab2c0;font-weight:400;letter-spacing:-0.600px;font-family:'Liberation Mono',monospace;">6459.50</div>
<div class="b" style="left:79px;top:0px;width:1px;height:718px;background:#1c2436;"></div>
<div class="b" style="left:308px;top:0px;width:1px;height:718px;background:#1c2436;"></div>
<div class="b" style="left:308px;top:255px;width:535px;height:21px;background:#1a2622;"></div>
<div class="b" style="left:308px;top:276px;width:535px;height:1px;background:#141c1c;"></div>
<div class="t r" style="left:316.14px;top:260.00px;font-size:12.0px;line-height:12.0px;color:#cfe3d6;font-weight:400;letter-spacing:-0.600px;font-family:'Liberation Mono',monospace;">STACK</div>
<svg class="b" style="left:353.67568359375px;top:263px" width="7.5" height="7.3" viewBox="0 0 7.5 7.3"><polygon points="3.75,0 7.5,7.3 0,7.3" fill="#5fcf85"/></svg>
<div class="t" style="left:365.11px;top:260.00px;font-size:12.0px;line-height:12.0px;color:#cfe3d6;font-weight:700;letter-spacing:-0.600px;font-family:'Liberation Mono',monospace;">1</div>
<div class="b" style="left:308px;top:299px;width:535px;height:21px;background:#4e9e3a;"></div>
<div class="b" style="left:308px;top:320px;width:535px;height:1px;background:#0b0f0a;"></div>
<div class="t r" style="left:315.42px;top:304.00px;font-size:12.0px;line-height:12.0px;color:#e2f2dc;font-weight:400;letter-spacing:-0.600px;font-family:'Liberation Mono',monospace;">ICEBERG</div>
<svg class="b" style="left:366.21503906250007px;top:307px" width="7.5" height="7.3" viewBox="0 0 7.5 7.3"><polygon points="3.75,0 7.5,7.3 0,7.3" fill="#8fd99a"/></svg>
<div class="t" style="left:377.68px;top:304.00px;font-size:12.0px;line-height:12.0px;color:#ffffff;font-weight:700;letter-spacing:-0.600px;font-family:'Liberation Mono',monospace;">4</div>
<div class="b" style="left:397.4150390625001px;top:304.5px;width:1px;height:10.5px;background:#74ae66;"></div>
<div class="t r" style="left:407.03px;top:304.00px;font-size:12.0px;line-height:12.0px;color:#e2f2dc;font-weight:400;letter-spacing:-0.600px;font-family:'Liberation Mono',monospace;">ICEBERG</div>
<svg class="b" style="left:457.8300781250001px;top:307px" width="7.5" height="7.3" viewBox="0 0 7.5 7.3"><polygon points="0,0 7.5,0 3.75,7.3" fill="#f07a6e"/></svg>
<div class="t" style="left:469.27px;top:304.00px;font-size:12.0px;line-height:12.0px;color:#ffffff;font-weight:700;letter-spacing:-0.600px;font-family:'Liberation Mono',monospace;">2</div>
<div class="b" style="left:308px;top:321px;width:535px;height:21px;background:#4e9e3a;"></div>
<div class="b" style="left:308px;top:342px;width:535px;height:1px;background:#0b0f0a;"></div>
<div class="t r" style="left:315.42px;top:326.00px;font-size:12.0px;line-height:12.0px;color:#e2f2dc;font-weight:400;letter-spacing:-0.600px;font-family:'Liberation Mono',monospace;">ICEBERG</div>
<svg class="b" style="left:366.21503906250007px;top:329px" width="7.5" height="7.3" viewBox="0 0 7.5 7.3"><polygon points="3.75,0 7.5,7.3 0,7.3" fill="#8fd99a"/></svg>
<div class="t" style="left:377.65px;top:326.00px;font-size:12.0px;line-height:12.0px;color:#ffffff;font-weight:700;letter-spacing:-0.600px;font-family:'Liberation Mono',monospace;">6</div>
<div class="b" style="left:397.4150390625001px;top:326.5px;width:1px;height:10.5px;background:#74ae66;"></div>
<div class="t r" style="left:407.03px;top:326.00px;font-size:12.0px;line-height:12.0px;color:#e2f2dc;font-weight:400;letter-spacing:-0.600px;font-family:'Liberation Mono',monospace;">ICEBERG</div>
<svg class="b" style="left:457.8300781250001px;top:329px" width="7.5" height="7.3" viewBox="0 0 7.5 7.3"><polygon points="0,0 7.5,0 3.75,7.3" fill="#f07a6e"/></svg>
<div class="t" style="left:469.28px;top:326.00px;font-size:12.0px;line-height:12.0px;color:#ffffff;font-weight:700;letter-spacing:-0.600px;font-family:'Liberation Mono',monospace;">3</div>
<div class="b" style="left:489.03007812500016px;top:326.5px;width:1px;height:10.5px;background:#74ae66;"></div>
<div class="t r" style="left:499.37px;top:326.00px;font-size:12.0px;line-height:12.0px;color:#e2f2dc;font-weight:400;letter-spacing:-0.600px;font-family:'Liberation Mono',monospace;">STACK</div>
<svg class="b" style="left:536.9057617187501px;top:329px" width="7.5" height="7.3" viewBox="0 0 7.5 7.3"><polygon points="3.75,0 7.5,7.3 0,7.3" fill="#8fd99a"/></svg>
<div class="t" style="left:548.34px;top:326.00px;font-size:12.0px;line-height:12.0px;color:#ffffff;font-weight:700;letter-spacing:-0.600px;font-family:'Liberation Mono',monospace;">1</div>
<div class="b" style="left:308px;top:343px;width:535px;height:21px;background:#4e9e3a;"></div>
<div class="b" style="left:308px;top:364px;width:535px;height:1px;background:#0b0f0a;"></div>
<div class="t r" style="left:315.42px;top:348.00px;font-size:12.0px;line-height:12.0px;color:#e2f2dc;font-weight:400;letter-spacing:-0.600px;font-family:'Liberation Mono',monospace;">ICEBERG</div>
<svg class="b" style="left:366.21503906250007px;top:351px" width="7.5" height="7.3" viewBox="0 0 7.5 7.3"><polygon points="3.75,0 7.5,7.3 0,7.3" fill="#8fd99a"/></svg>
<div class="t" style="left:377.68px;top:348.00px;font-size:12.0px;line-height:12.0px;color:#ffffff;font-weight:700;letter-spacing:-0.600px;font-family:'Liberation Mono',monospace;">4</div>
<div class="b" style="left:397.4150390625001px;top:348.5px;width:1px;height:10.5px;background:#74ae66;"></div>
<div class="t r" style="left:407.03px;top:348.00px;font-size:12.0px;line-height:12.0px;color:#e2f2dc;font-weight:400;letter-spacing:-0.600px;font-family:'Liberation Mono',monospace;">ICEBERG</div>
<svg class="b" style="left:457.8300781250001px;top:351px" width="7.5" height="7.3" viewBox="0 0 7.5 7.3"><polygon points="0,0 7.5,0 3.75,7.3" fill="#f07a6e"/></svg>
<div class="t" style="left:469.28px;top:348.00px;font-size:12.0px;line-height:12.0px;color:#ffffff;font-weight:700;letter-spacing:-0.600px;font-family:'Liberation Mono',monospace;">3</div>
<div class="b" style="left:489.03007812500016px;top:348.5px;width:1px;height:10.5px;background:#74ae66;"></div>
<div class="t r" style="left:499.83px;top:348.00px;font-size:12.0px;line-height:12.0px;color:#e2f2dc;font-weight:400;letter-spacing:-0.600px;font-family:'Liberation Mono',monospace;">ABSORB</div>
<svg class="b" style="left:543.9300781250001px;top:351px" width="7.5" height="7.3" viewBox="0 0 7.5 7.3"><polygon points="3.75,0 7.5,7.3 0,7.3" fill="#8fd99a"/></svg>
<div class="t" style="left:555.36px;top:348.00px;font-size:12.0px;line-height:12.0px;color:#ffffff;font-weight:700;letter-spacing:-0.600px;font-family:'Liberation Mono',monospace;">1</div>
<div class="b" style="left:308px;top:365px;width:535px;height:21px;background:#4e9e3a;"></div>
<div class="b" style="left:308px;top:386px;width:535px;height:1px;background:#0b0f0a;"></div>
<div class="t r" style="left:315.42px;top:370.00px;font-size:12.0px;line-height:12.0px;color:#e2f2dc;font-weight:400;letter-spacing:-0.600px;font-family:'Liberation Mono',monospace;">ICEBERG</div>
<svg class="b" style="left:366.21503906250007px;top:373px" width="7.5" height="7.3" viewBox="0 0 7.5 7.3"><polygon points="3.75,0 7.5,7.3 0,7.3" fill="#8fd99a"/></svg>
<div class="t" style="left:377.65px;top:370.00px;font-size:12.0px;line-height:12.0px;color:#ffffff;font-weight:700;letter-spacing:-0.600px;font-family:'Liberation Mono',monospace;">7</div>
<div class="b" style="left:397.4150390625001px;top:370.5px;width:1px;height:10.5px;background:#74ae66;"></div>
<div class="t r" style="left:407.03px;top:370.00px;font-size:12.0px;line-height:12.0px;color:#e2f2dc;font-weight:400;letter-spacing:-0.600px;font-family:'Liberation Mono',monospace;">ICEBERG</div>
<svg class="b" style="left:457.8300781250001px;top:373px" width="7.5" height="7.3" viewBox="0 0 7.5 7.3"><polygon points="0,0 7.5,0 3.75,7.3" fill="#f07a6e"/></svg>
<div class="t" style="left:469.28px;top:370.00px;font-size:12.0px;line-height:12.0px;color:#ffffff;font-weight:700;letter-spacing:-0.600px;font-family:'Liberation Mono',monospace;">5</div>
<div class="b" style="left:308px;top:387px;width:535px;height:21px;background:#4e9e3a;"></div>
<div class="b" style="left:308px;top:408px;width:535px;height:1px;background:#0b0f0a;"></div>
<div class="t r" style="left:315.42px;top:392.00px;font-size:12.0px;line-height:12.0px;color:#e2f2dc;font-weight:400;letter-spacing:-0.600px;font-family:'Liberation Mono',monospace;">ICEBERG</div>
<svg class="b" style="left:366.21503906250007px;top:395px" width="7.5" height="7.3" viewBox="0 0 7.5 7.3"><polygon points="3.75,0 7.5,7.3 0,7.3" fill="#8fd99a"/></svg>
<div class="t" style="left:377.65px;top:392.00px;font-size:12.0px;line-height:12.0px;color:#ffffff;font-weight:700;letter-spacing:-0.600px;font-family:'Liberation Mono',monospace;">11</div>
<div class="b" style="left:404.01503906250014px;top:392.5px;width:1px;height:10.5px;background:#74ae66;"></div>
<div class="t r" style="left:413.63px;top:392.00px;font-size:12.0px;line-height:12.0px;color:#e2f2dc;font-weight:400;letter-spacing:-0.600px;font-family:'Liberation Mono',monospace;">ICEBERG</div>
<svg class="b" style="left:464.43007812500014px;top:395px" width="7.5" height="7.3" viewBox="0 0 7.5 7.3"><polygon points="0,0 7.5,0 3.75,7.3" fill="#f07a6e"/></svg>
<div class="t" style="left:475.86px;top:392.00px;font-size:12.0px;line-height:12.0px;color:#ffffff;font-weight:700;letter-spacing:-0.600px;font-family:'Liberation Mono',monospace;">10</div>
<div class="b" style="left:502.2300781250002px;top:392.5px;width:1px;height:10.5px;background:#74ae66;"></div>
<div class="t r" style="left:513.03px;top:392.00px;font-size:12.0px;line-height:12.0px;color:#e2f2dc;font-weight:400;letter-spacing:-0.600px;font-family:'Liberation Mono',monospace;">ABSORB</div>
<svg class="b" style="left:557.1300781250002px;top:395px" width="7.5" height="7.3" viewBox="0 0 7.5 7.3"><polygon points="3.75,0 7.5,7.3 0,7.3" fill="#8fd99a"/></svg>
<div class="t" style="left:568.57px;top:392.00px;font-size:12.0px;line-height:12.0px;color:#ffffff;font-weight:700;letter-spacing:-0.600px;font-family:'Liberation Mono',monospace;">2</div>
<div class="b" style="left:308px;top:409px;width:535px;height:21px;background:#bd4828;"></div>
<div class="b" style="left:308px;top:430px;width:535px;height:1px;background:#3a120a;"></div>
<div class="t r" style="left:315.42px;top:414.00px;font-size:12.0px;line-height:12.0px;color:#f6dcd2;font-weight:400;letter-spacing:-0.600px;font-family:'Liberation Mono',monospace;">ICEBERG</div>
<svg class="b" style="left:366.21503906250007px;top:417px" width="7.5" height="7.3" viewBox="0 0 7.5 7.3"><polygon points="3.75,0 7.5,7.3 0,7.3" fill="#7fd99a"/></svg>
<div class="t" style="left:377.65px;top:414.00px;font-size:12.0px;line-height:12.0px;color:#ffffff;font-weight:700;letter-spacing:-0.600px;font-family:'Liberation Mono',monospace;">10</div>
<div class="b" style="left:404.01503906250014px;top:414.5px;width:1px;height:10.5px;background:#d77a60;"></div>
<div class="t r" style="left:413.63px;top:414.00px;font-size:12.0px;line-height:12.0px;color:#f6dcd2;font-weight:400;letter-spacing:-0.600px;font-family:'Liberation Mono',monospace;">ICEBERG</div>
<svg class="b" style="left:464.43007812500014px;top:417px" width="7.5" height="7.3" viewBox="0 0 7.5 7.3"><polygon points="0,0 7.5,0 3.75,7.3" fill="#e88a7a"/></svg>
<div class="t" style="left:475.86px;top:414.00px;font-size:12.0px;line-height:12.0px;color:#ffffff;font-weight:700;letter-spacing:-0.600px;font-family:'Liberation Mono',monospace;">12</div>
<div class="b" style="left:502.2300781250002px;top:414.5px;width:1px;height:10.5px;background:#d77a60;"></div>
<div class="t r" style="left:512.57px;top:414.00px;font-size:12.0px;line-height:12.0px;color:#f6dcd2;font-weight:400;letter-spacing:-0.600px;font-family:'Liberation Mono',monospace;">STACK</div>
<svg class="b" style="left:550.1057617187502px;top:417px" width="7.5" height="7.3" viewBox="0 0 7.5 7.3"><polygon points="0,0 7.5,0 3.75,7.3" fill="#e88a7a"/></svg>
<div class="t" style="left:561.55px;top:414.00px;font-size:12.0px;line-height:12.0px;color:#ffffff;font-weight:700;letter-spacing:-0.600px;font-family:'Liberation Mono',monospace;">2</div>
<div class="b" style="left:308px;top:431px;width:535px;height:21px;background:#bd4828;"></div>
<div class="b" style="left:308px;top:452px;width:535px;height:1px;background:#3a120a;"></div>
<div class="t r" style="left:315.42px;top:436.00px;font-size:12.0px;line-height:12.0px;color:#f6dcd2;font-weight:400;letter-spacing:-0.600px;font-family:'Liberation Mono',monospace;">ICEBERG</div>
<svg class="b" style="left:366.21503906250007px;top:439px" width="7.5" height="7.3" viewBox="0 0 7.5 7.3"><polygon points="3.75,0 7.5,7.3 0,7.3" fill="#7fd99a"/></svg>
<div class="t" style="left:377.65px;top:436.00px;font-size:12.0px;line-height:12.0px;color:#ffffff;font-weight:700;letter-spacing:-0.600px;font-family:'Liberation Mono',monospace;">2</div>
<div class="b" style="left:397.4150390625001px;top:436.5px;width:1px;height:10.5px;background:#d77a60;"></div>
<div class="t r" style="left:407.03px;top:436.00px;font-size:12.0px;line-height:12.0px;color:#f6dcd2;font-weight:400;letter-spacing:-0.600px;font-family:'Liberation Mono',monospace;">ICEBERG</div>
<svg class="b" style="left:457.8300781250001px;top:439px" width="7.5" height="7.3" viewBox="0 0 7.5 7.3"><polygon points="0,0 7.5,0 3.75,7.3" fill="#e88a7a"/></svg>
<div class="t" style="left:469.28px;top:436.00px;font-size:12.0px;line-height:12.0px;color:#ffffff;font-weight:700;letter-spacing:-0.600px;font-family:'Liberation Mono',monospace;">8</div>
<div class="b" style="left:489.03007812500016px;top:436.5px;width:1px;height:10.5px;background:#d77a60;"></div>
<div class="t r" style="left:499.83px;top:436.00px;font-size:12.0px;line-height:12.0px;color:#f6dcd2;font-weight:400;letter-spacing:-0.600px;font-family:'Liberation Mono',monospace;">ABSORB</div>
<svg class="b" style="left:543.9300781250001px;top:439px" width="7.5" height="7.3" viewBox="0 0 7.5 7.3"><polygon points="0,0 7.5,0 3.75,7.3" fill="#e88a7a"/></svg>
<div class="t" style="left:555.36px;top:436.00px;font-size:12.0px;line-height:12.0px;color:#ffffff;font-weight:700;letter-spacing:-0.600px;font-family:'Liberation Mono',monospace;">1</div>
<div class="b" style="left:308px;top:453px;width:535px;height:21px;background:#6c2a22;"></div>
<div class="b" style="left:308px;top:474px;width:535px;height:1px;background:#2a1010;"></div>
<div class="t r" style="left:315.42px;top:458.00px;font-size:12.0px;line-height:12.0px;color:#f0d6cf;font-weight:400;letter-spacing:-0.600px;font-family:'Liberation Mono',monospace;">ICEBERG</div>
<svg class="b" style="left:366.21503906250007px;top:461px" width="7.5" height="7.3" viewBox="0 0 7.5 7.3"><polygon points="0,0 7.5,0 3.75,7.3" fill="#ee8070"/></svg>
<div class="t" style="left:377.67px;top:458.00px;font-size:12.0px;line-height:12.0px;color:#ffffff;font-weight:700;letter-spacing:-0.600px;font-family:'Liberation Mono',monospace;">3</div>
<div class="b" style="left:308px;top:475px;width:535px;height:21px;background:#421e21;"></div>
<div class="b" style="left:308px;top:496px;width:535px;height:1px;background:#1a1420;"></div>
<div class="t r" style="left:315.42px;top:480.00px;font-size:12.0px;line-height:12.0px;color:#d9b4b4;font-weight:400;letter-spacing:-0.600px;font-family:'Liberation Mono',monospace;">ICEBERG</div>
<svg class="b" style="left:366.21503906250007px;top:483px" width="7.5" height="7.3" viewBox="0 0 7.5 7.3"><polygon points="0,0 7.5,0 3.75,7.3" fill="#e07070"/></svg>
<div class="t" style="left:377.65px;top:480.00px;font-size:12.0px;line-height:12.0px;color:#e6c6c6;font-weight:700;letter-spacing:-0.600px;font-family:'Liberation Mono',monospace;">1</div>
<div class="b" style="left:308px;top:497px;width:535px;height:21px;background:#1a3026;"></div>
<div class="b" style="left:308px;top:518px;width:535px;height:1px;background:#141c1c;"></div>
<svg class="b" style="left:316.79999999999995px;top:504.5px" width="7" height="7" viewBox="0 0 10 10"><polygon points="5,0 6.2,3.6 10,3.7 7,6 8.1,9.7 5,7.5 1.9,9.7 3,6 0,3.7 3.8,3.6" fill="#5fd3a0"/></svg>
<div class="t r" style="left:331.94px;top:502.00px;font-size:12.0px;line-height:12.0px;color:#bfe3cf;font-weight:400;letter-spacing:-0.600px;font-family:'Liberation Mono',monospace;">STACK</div>
<svg class="b" style="left:369.47568359375px;top:505px" width="7.5" height="7.3" viewBox="0 0 7.5 7.3"><polygon points="3.75,0 7.5,7.3 0,7.3" fill="#5fcf85"/></svg>
<div class="t" style="left:380.91px;top:502.00px;font-size:12.0px;line-height:12.0px;color:#bfe3cf;font-weight:700;letter-spacing:-0.600px;font-family:'Liberation Mono',monospace;">1</div>
<svg class="b" style="left:166.29999999999995px;top:329.6px" width="6.2" height="5.2" viewBox="0 0 6.2 5.2"><polygon points="3.1,0 6.2,5.2 0,5.2" fill="#5fd3a0"/></svg>
<div class="t" style="left:178.56px;top:327.00px;font-size:11.0px;line-height:11.0px;color:#5fd3a0;font-weight:700;letter-spacing:-0.600px;font-family:'Liberation Mono',monospace;">13b/12s</div>
<div class="b" style="left:79px;top:497px;width:229px;height:21px;background:#2f2f2c;"></div>
<div class="b" style="left:79px;top:497px;width:3.5px;height:21px;background:#4aae62;"></div>
<div class="t" style="left:177.07px;top:504.00px;font-size:11.0px;line-height:11.0px;color:#f5f5f5;font-weight:700;letter-spacing:-0.600px;font-family:'Liberation Mono',monospace;">POC</div>
<div class="t" style="left:203.40px;top:506.00px;font-size:9.0px;line-height:9.0px;color:#9a9a98;font-weight:700;letter-spacing:-0.600px;font-family:'Liberation Mono',monospace;">B</div>
</div>
<div class="b" style="left:0px;top:28px;width:843px;height:1px;background:#2b3346;"></div>
<div class="b" style="left:79px;top:0px;width:1px;height:28px;background:#1c2436;"></div>
<div class="b" style="left:308px;top:0px;width:1px;height:28px;background:#1c2436;"></div>
</div>
<div class="b" style="left:14px;top:869px;width:1216px;height:80px;box-sizing:border-box;border:1px solid #2b3346;border-radius:8px;background:#111628;"></div>
<div class="b" style="left:15px;top:909px;width:1214px;height:1px;background:#222a3b;"></div>
<div class="t r" style="left:26.41px;top:886.00px;font-size:10.0px;line-height:10.0px;color:#414859;font-weight:400;letter-spacing:-0.420px;font-family:'Liberation Mono',monospace;">BIAS</div>
<div class="t" style="left:56.08px;top:884.00px;font-size:12.5px;line-height:12.5px;color:#f4c232;font-weight:700;letter-spacing:-0.720px;font-family:'Liberation Mono',monospace;">NEUTRAL</div>
<div class="b" style="left:115.3px;top:881px;width:1px;height:16px;background:#262e3f;"></div>
<div class="t r" style="left:127.81px;top:886.00px;font-size:10.0px;line-height:10.0px;color:#414859;font-weight:400;letter-spacing:-0.540px;font-family:'Liberation Mono',monospace;">PRESS</div>
<div class="b" style="left:163px;top:886.3px;width:56.5px;height:6px;border-radius:3px;background:#394152;"></div>
<div class="b" style="left:163px;top:886.3px;width:29px;height:6px;border-radius:3px 0 0 3px;background:#f4c02c;"></div>
<div class="t r" style="left:226.68px;top:884.00px;font-size:11.5px;line-height:11.5px;color:#c9ced8;font-weight:400;letter-spacing:-0.600px;font-family:'Liberation Mono',monospace;">52%</div>
<div class="b" style="left:257.7px;top:881px;width:1px;height:16px;background:#262e3f;"></div>
<div class="t r" style="left:269.41px;top:886.00px;font-size:10.0px;line-height:10.0px;color:#414859;font-weight:400;letter-spacing:-0.420px;font-family:'Liberation Mono',monospace;">DELTA</div>
<div class="b" style="left:303px;top:888px;width:7.3px;height:3.8px;background:#f4c232;"></div>
<div class="b" style="left:322.7px;top:881px;width:1px;height:16px;background:#262e3f;"></div>
<div class="t r" style="left:334.93px;top:884.00px;font-size:12.0px;line-height:12.0px;color:#4fb89a;font-weight:400;letter-spacing:-0.600px;font-family:'Liberation Mono',monospace;">160b</div>
<div class="t r" style="left:367.93px;top:884.00px;font-size:12.0px;line-height:12.0px;color:#3a4152;font-weight:400;letter-spacing:-0.600px;font-family:'Liberation Mono',monospace;">/</div>
<div class="t r" style="left:379.83px;top:884.00px;font-size:12.0px;line-height:12.0px;color:#d9707a;font-weight:400;letter-spacing:-0.600px;font-family:'Liberation Mono',monospace;">149s</div>
<div class="b" style="left:419px;top:881px;width:1px;height:16px;background:#262e3f;"></div>
<div class="t r" style="left:430.27px;top:885.00px;font-size:10.5px;line-height:10.5px;color:#414859;font-weight:400;letter-spacing:-0.600px;font-family:'Liberation Mono',monospace;">DIR</div>
<div class="b" style="left:456px;top:889px;width:5.5px;height:1.3px;background:#4b5466;"></div>
<div class="b" style="left:463.5px;top:889px;width:5.5px;height:1.3px;background:#4b5466;"></div>
<div class="b" style="left:481.5px;top:881px;width:1px;height:16px;background:#262e3f;"></div>
<div class="t r" style="left:493.98px;top:886.00px;font-size:9.5px;line-height:9.5px;color:#414859;font-weight:400;letter-spacing:-0.420px;font-family:'Liberation Mono',monospace;">CONF</div>
<div class="t" style="left:523.16px;top:884.00px;font-size:12.5px;line-height:12.5px;color:#5fd3a0;font-weight:700;letter-spacing:-0.720px;font-family:'Liberation Mono',monospace;">HIGH</div>
<div class="b" style="left:562.7px;top:881px;width:1px;height:16px;background:#262e3f;"></div>
<div class="t r" style="left:574.41px;top:884.00px;font-size:12.0px;line-height:12.0px;color:#f4c232;font-weight:400;letter-spacing:-0.600px;font-family:'Liberation Mono',monospace;">L</div>
<div class="t r" style="left:581.06px;top:884.00px;font-size:12.0px;line-height:12.0px;color:#535b6b;font-weight:400;letter-spacing:-0.600px;font-family:'Liberation Mono',monospace;">iq</div>
<div class="t r" style="left:606.74px;top:884.00px;font-size:12.0px;line-height:12.0px;color:#f4c232;font-weight:400;letter-spacing:-0.600px;font-family:'Liberation Mono',monospace;">C</div>
<div class="t r" style="left:613.33px;top:884.00px;font-size:12.0px;line-height:12.0px;color:#535b6b;font-weight:400;letter-spacing:-0.600px;font-family:'Liberation Mono',monospace;">oh</div>
<div class="t r" style="left:638.52px;top:884.00px;font-size:12.0px;line-height:12.0px;color:#f4c232;font-weight:400;letter-spacing:-0.600px;font-family:'Liberation Mono',monospace;">I</div>
<div class="t r" style="left:645.13px;top:884.00px;font-size:12.0px;line-height:12.0px;color:#535b6b;font-weight:400;letter-spacing:-0.600px;font-family:'Liberation Mono',monospace;">ns</div>
<div class="t r" style="left:670.36px;top:884.00px;font-size:12.0px;line-height:12.0px;color:#ef6b5f;font-weight:400;letter-spacing:-0.600px;font-family:'Liberation Mono',monospace;">F</div>
<div class="t r" style="left:676.97px;top:884.00px;font-size:12.0px;line-height:12.0px;color:#535b6b;font-weight:400;letter-spacing:-0.600px;font-family:'Liberation Mono',monospace;">tp</div>
<div class="b" style="left:702.8px;top:881px;width:1px;height:16px;background:#262e3f;"></div>
<div class="t r" style="left:715.05px;top:884.00px;font-size:12.0px;line-height:12.0px;color:#74a3f2;font-weight:400;letter-spacing:-0.600px;font-family:'Liberation Mono',monospace;">POC</div>
<div class="t r" style="left:743.02px;top:884.00px;font-size:12.0px;line-height:12.0px;color:#f0f1f4;font-weight:400;letter-spacing:-0.600px;font-family:'Liberation Mono',monospace;">6450.00</div>
<div class="b" style="left:802.7px;top:881px;width:1px;height:16px;background:#262e3f;"></div>
<div class="t r" style="left:814.39px;top:885.00px;font-size:10.5px;line-height:10.5px;color:#414859;font-weight:400;letter-spacing:-0.480px;font-family:'Liberation Mono',monospace;">SPR</div>
<div class="t" style="left:839.04px;top:884.00px;font-size:12.0px;line-height:12.0px;color:#5fd3a0;font-weight:700;letter-spacing:-0.600px;font-family:'Liberation Mono',monospace;">TIGHT</div>
<div class="b" style="left:885.3px;top:881px;width:1px;height:16px;background:#262e3f;"></div>
<div class="t r" style="left:896.57px;top:885.00px;font-size:10.5px;line-height:10.5px;color:#414859;font-weight:400;letter-spacing:-0.660px;font-family:'Liberation Mono',monospace;">RATE</div>
<div class="t" style="left:926.87px;top:884.00px;font-size:12.5px;line-height:12.5px;color:#ee7480;font-weight:700;letter-spacing:-0.600px;font-family:'Liberation Mono',monospace;">SLOW</div>
<div class="b" style="left:965.8px;top:881px;width:1px;height:16px;background:#262e3f;"></div>
<div class="t r" style="left:978.29px;top:885.00px;font-size:10.5px;line-height:10.5px;color:#414859;font-weight:400;letter-spacing:-0.600px;font-family:'Liberation Mono',monospace;">SLP</div>
<div class="b" style="left:999px;top:888px;width:7px;height:3.8px;background:#f4c232;"></div>
<svg class="b" style="left:26px;top:919px" width="6.2" height="5" viewBox="0 0 6.2 5"><polygon points="0,0 6.2,0 3.1,5" fill="#4b5466"/></svg>
<div class="t" style="left:40.89px;top:918.00px;font-size:10.5px;line-height:10.5px;color:#5a6274;font-weight:700;letter-spacing:-0.540px;font-family:'Liberation Mono',monospace;">CONTEXT</div>
</body></html>
